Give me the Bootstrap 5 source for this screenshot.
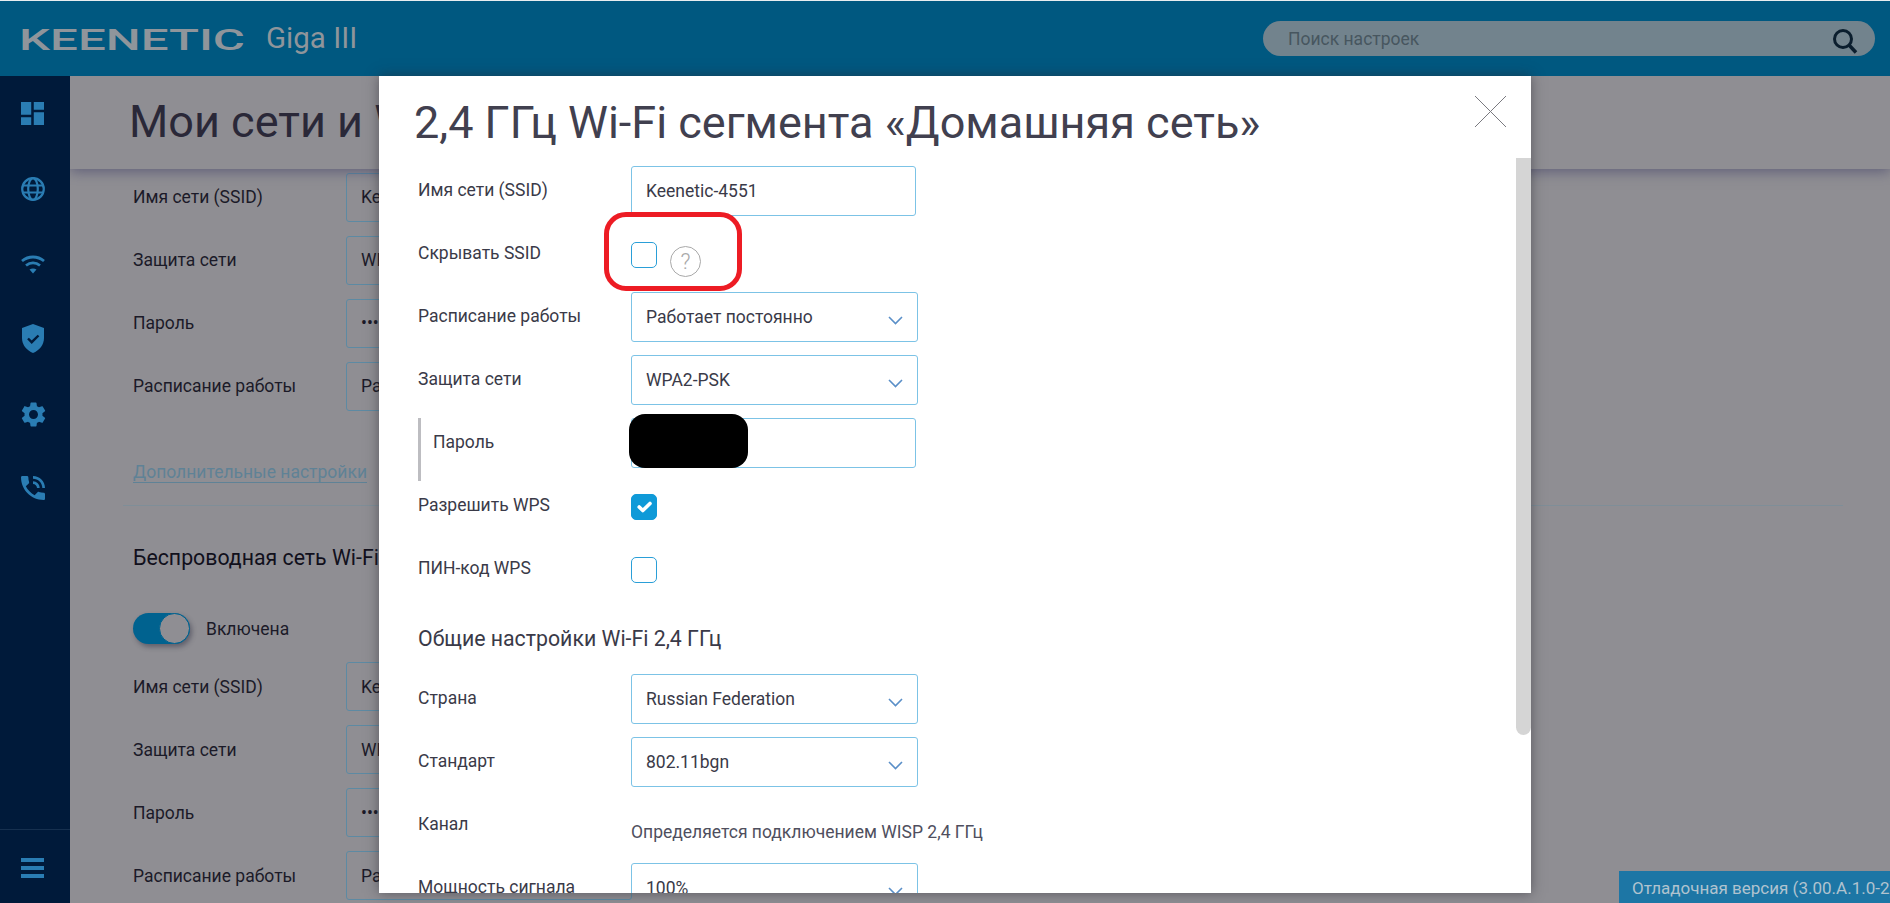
<!doctype html>
<html lang="ru">
<head>
<meta charset="utf-8">
<title>Keenetic Giga III</title>
<link href="https://cdn.jsdelivr.net/npm/bootstrap@5.3.0/dist/css/bootstrap.min.css" rel="stylesheet">
<style>
html,body{height:100%;overflow:hidden}
body{font-family:Roboto,"Liberation Sans",sans-serif;background:#8f8e93;color:#1b1a28;font-size:17.5px}
.kn-page{height:903px;position:relative;overflow:hidden}
.kn-top{height:76px;background:#005880;border-top:1px solid #e8edf0;flex:none}
.kn-logo{margin-left:19px;display:block}
.kn-logo text{font-family:Roboto,sans-serif;font-weight:500;font-size:29px;fill:#8f959b}
.kn-model{margin-left:21px;font-size:29.5px;font-weight:400;color:#8f959b;line-height:1}
.kn-search{width:612px;height:35px;margin-right:15px;position:relative}
.kn-search input{height:35px;padding:0 25px;border:0;background:#72838d;color:#4a5a66;font-size:17.5px;font-family:Roboto,sans-serif}
.kn-search input::placeholder{color:#47565f;opacity:1}
.kn-search svg{position:absolute;right:17px;top:7px}
.kn-side{width:70px;background:#001a3a;flex:none}
.kn-navlist{padding-top:26px}
.kn-navico{height:74px;padding-left:21px;display:flex;align-items:flex-start}
.kn-navico svg{fill:#2a7db3;display:block}
.kn-navico svg.kn-nudge{margin-top:4px}
.kn-navico svg.kn-line{fill:none;stroke:#2a7db3}
.kn-navico svg .kn-solid{fill:#2a7db3;stroke:none}
.kn-sidefoot{border-top:1px solid #16304f;height:74px;padding:28px 0 0 21px}
.kn-sidefoot i{display:block;height:4px;width:23px;background:#2a7db3;margin-bottom:4px}
.kn-band{height:93px;flex:none;padding:20px 0 0 59px;box-shadow:0 3px 12px rgba(60,60,100,.55);position:relative;background:#8f8e93}
.kn-band h1{font-size:45px;font-weight:400;line-height:52px;margin:0;color:#2a2838;white-space:nowrap}
.kn-bg{padding:4px 47px 0 63px;overflow:hidden}
.kn-bgrow{height:49px;margin-bottom:14px}
.kn-bglabel{width:213px;color:#1b1a28;flex:none}
.kn-bgbox{width:286px;height:49px;border:1px solid #5d8aa3;border-radius:3px;padding:0 14px;display:flex;align-items:center;flex:none;color:#1b1a28}
.kn-more{color:#5f8296;border-bottom:1px solid #5f8296;line-height:20px;display:inline-block;margin-top:37px}
.kn-rule{border-top:1px solid #7f8e98;margin:20px 0 0 -10px}
.kn-bghead{font-size:21.3px;line-height:28px;margin:38px 0 41px;font-weight:400;color:#11101c}
.kn-switchrow{margin-bottom:18px}
.kn-toggle{width:57px;height:31px;border-radius:16px;background:#00628f;box-shadow:2px 3px 5px rgba(40,40,60,.45);flex:none}
.kn-knob{width:31px;height:31px;border-radius:50%;background:#8f8e93;border:1px solid #00628f}
.kn-modal{position:absolute;left:379px;top:76px;width:1152px;height:817px;background:#fff;box-shadow:0 0 12px rgba(40,40,50,.55);overflow:hidden;padding:21px 0 0 39px;color:#3a3a48}
.kn-title{font-size:45px;font-weight:400;line-height:52px;margin:0 0 17px -4px;color:#41404f;white-space:nowrap}
.kn-row{height:50px;margin-bottom:13px}
.kn-label{width:213px;flex:none;color:#3a3a48;line-height:48px;white-space:nowrap}
.kn-pass{height:63px;margin-bottom:0;border-left:3px solid #bdbdc1}
.kn-pass .kn-label{width:210px;padding-left:12px}
.form-control.kn-field{width:285px;height:50px;border:1px solid #7cc3e6;border-radius:3px;padding:0 14px;font-size:17.5px;color:#3a3a48}
.form-select.kn-field{width:287px;height:50px;border:1px solid #7cc3e6;border-radius:3px;padding:0 14px;font-size:17.5px;color:#3a3a48;background-position:right 14px top 23px;background-size:15px 9px;background-image:url("data:image/svg+xml,%3csvg xmlns='http://www.w3.org/2000/svg' viewBox='0 0 15 9'%3e%3cpath fill='none' stroke='%235a8fc8' stroke-width='1.6' d='M1 1l6.5 6.5L14 1'/%3e%3c/svg%3e")}
.form-check-input.kn-box{width:26px;height:26px;margin:13px 0 0;border:1px solid #2a9fd8;border-radius:5px;flex:none}
.form-check-input.kn-box:checked{background-color:#0f9ad8;border-color:#0f9ad8}
.kn-help{width:31px;height:31px;border:1px solid #a9a9a9;color:#a9a9a9;font-size:22px;font-weight:300;margin:17px 0 0 13px}
.kn-sub{font-size:21.3px;line-height:28px;height:67px;padding-top:18px;margin:0;font-weight:400;color:#3a3a48}
.kn-hint{margin-top:20px;color:#4f4f5e;line-height:24px;white-space:nowrap}
.kn-close{position:absolute;right:25px;top:20px}
.kn-thumb{position:absolute;right:0;top:82px;width:15px;height:577px;background:#d5d5d5;border-radius:0 0 8px 8px}
.kn-mark{position:absolute;left:225px;top:136px;width:138px;height:79px;border:5px solid #ed1c24;border-radius:22px}
.kn-blot{position:absolute;left:250px;top:338px;width:119px;height:54px;background:#000;border-radius:16px}
.kn-debug{position:absolute;right:0;bottom:0;width:271px;height:32px;background:#1d76a5;color:#b0c3cf;font-size:17px;padding-left:13px;line-height:34px;white-space:nowrap;overflow:hidden}
</style>
</head>
<body>
<div class="kn-page d-flex flex-column">
  <header class="kn-top d-flex align-items-center justify-content-between">
    <div class="d-flex align-items-center">
      <svg class="kn-logo" width="226" height="24" viewBox="0 0 226 24"><text x="0" y="22.500" textLength="226" lengthAdjust="spacingAndGlyphs">KEENETIC</text></svg>
      <span class="kn-model">Giga III</span>
    </div>
    <div class="kn-search">
      <input class="form-control rounded-pill" type="text" placeholder="Поиск настроек">
      <svg width="26" height="26" viewBox="0 0 26 26" fill="none" stroke="#0b1e2e"><circle cx="11" cy="11" r="8.500" stroke-width="3"/><path d="M17 17l7 7.500" stroke-width="3.500"/></svg>
    </div>
  </header>
  <div class="d-flex flex-grow-1 overflow-hidden">
    <aside class="kn-side d-flex flex-column">
      <div class="kn-navlist flex-grow-1">
        <div class="kn-navico"><svg width="23" height="23" viewBox="3 3 18 18"><path d="M3 13h8V3H3v10zm0 8h8v-6H3v6zm10 0h8V11h-8v10zm0-18v6h8V3h-8z"/></svg></div>
        <div class="kn-navico"><svg class="kn-line" width="24" height="26" viewBox="0 0 24 26" stroke-width="2.200"><circle cx="12" cy="13" r="10.800"/><ellipse cx="12" cy="13" rx="4.800" ry="10.800"/><path d="M1.500 9.500h21M1.500 16.500h21"/></svg></div>
        <div class="kn-navico"><svg class="kn-line kn-nudge" width="24" height="24" viewBox="0 0 24 24" stroke-width="2.800"><path d="M1 7c6.500-5.300 15.500-5.300 22 0M5 11.500c4.200-3.300 9.800-3.300 14 0"/><path class="kn-solid" d="M8.500 15.500L12 19.500l3.500-4c-2-1.500-5-1.500-7 0z"/></svg></div>
        <div class="kn-navico"><svg width="24" height="29" viewBox="0 0 24 29"><path d="M12 0L1 4v10c0 7 4.800 12.500 11 15 6.200-2.500 11-8 11-15V4z"/><path d="M7 14.500l3.700 3.700L17.500 11.500" fill="none" stroke="#001a3a" stroke-width="2.400"/></svg></div>
        <div class="kn-navico"><svg class="kn-nudge" width="25" height="25" viewBox="2.200 2 19.600 20"><path d="M19.140 12.940c.04-.3.06-.61.06-.94 0-.32-.02-.64-.07-.94l2.030-1.580c.18-.14.23-.41.12-.61l-1.920-3.320c-.12-.22-.37-.29-.59-.22l-2.390.96c-.5-.38-1.030-.7-1.620-.94l-.36-2.540c-.04-.24-.24-.41-.48-.41h-3.840c-.24 0-.43.17-.47.41l-.36 2.540c-.59.24-1.130.57-1.620.94l-2.390-.96c-.22-.08-.47 0-.59.22L2.740 8.870c-.12.21-.08.47.12.61l2.030 1.580c-.05.3-.09.63-.09.94s.02.64.07.94l-2.030 1.580c-.18.14-.23.41-.12.61l1.920 3.320c.12.22.37.29.59.22l2.390-.96c.5.38 1.030.7 1.620.94l.36 2.540c.05.24.24.41.48.41h3.840c.24 0 .44-.17.47-.41l.36-2.540c.59-.24 1.130-.56 1.620-.94l2.390.96c.22.08.47 0 .59-.22l1.920-3.320c.12-.22.07-.47-.12-.61l-2.010-1.580zM12 15.600c-1.980 0-3.600-1.620-3.600-3.600s1.620-3.600 3.600-3.600 3.600 1.620 3.600 3.600-1.620 3.600-3.600 3.600z"/></svg></div>
        <div class="kn-navico"><svg class="kn-nudge" width="24" height="24" viewBox="3 3 18 18"><path d="M20 15.500c-1.250 0-2.450-.2-3.570-.57-.35-.11-.74-.03-1.020.24l-2.200 2.200c-2.830-1.440-5.150-3.750-6.590-6.590l2.200-2.210c.28-.26.36-.65.25-1C8.700 6.450 8.500 5.250 8.500 4c0-.55-.45-1-1-1H4c-.55 0-1 .45-1 1 0 9.390 7.610 17 17 17 .55 0 1-.45 1-1v-3.500c0-.55-.45-1-1-1zM19 12h2c0-4.970-4.030-9-9-9v2c3.870 0 7 3.130 7 7zm-4 0h2c0-2.760-2.240-5-5-5v2c1.660 0 3 1.340 3 3z"/></svg></div>
      </div>
      <div class="kn-sidefoot"><i></i><i></i><i></i></div>
    </aside>
    <main class="flex-grow-1 d-flex flex-column overflow-hidden">
      <div class="kn-band"><h1>Мои сети и Wi-Fi</h1></div>
      <div class="kn-bg">
        <div class="kn-bgrow d-flex align-items-center"><div class="kn-bglabel">Имя сети (SSID)</div><div class="kn-bgbox">Keenetic-4551</div></div>
        <div class="kn-bgrow d-flex align-items-center"><div class="kn-bglabel">Защита сети</div><div class="kn-bgbox">WPA2-PSK</div></div>
        <div class="kn-bgrow d-flex align-items-center"><div class="kn-bglabel">Пароль</div><div class="kn-bgbox">••••••••</div></div>
        <div class="kn-bgrow d-flex align-items-center"><div class="kn-bglabel">Расписание работы</div><div class="kn-bgbox">Работает постоянно</div></div>
        <a class="kn-more text-decoration-none">Дополнительные настройки</a>
        <div class="kn-rule"></div>
        <h2 class="kn-bghead">Беспроводная сеть Wi-Fi 5 ГГц</h2>
        <div class="kn-switchrow d-flex align-items-center">
          <div class="kn-toggle d-flex justify-content-end"><div class="kn-knob"></div></div>
          <span class="ms-3">Включена</span>
        </div>
        <div class="kn-bgrow d-flex align-items-center"><div class="kn-bglabel">Имя сети (SSID)</div><div class="kn-bgbox">Keenetic-4551</div></div>
        <div class="kn-bgrow d-flex align-items-center"><div class="kn-bglabel">Защита сети</div><div class="kn-bgbox">WPA2-PSK</div></div>
        <div class="kn-bgrow d-flex align-items-center"><div class="kn-bglabel">Пароль</div><div class="kn-bgbox">••••••••</div></div>
        <div class="kn-bgrow d-flex align-items-center"><div class="kn-bglabel">Расписание работы</div><div class="kn-bgbox">Работает постоянно</div></div>
      </div>
    </main>
  </div>

  <section class="kn-modal">
    <h2 class="kn-title">2,4 ГГц Wi-Fi сегмента «Домашняя сеть»</h2>
    <div class="kn-row d-flex"><label class="kn-label">Имя сети (SSID)</label><input class="form-control kn-field" value="Keenetic-4551"></div>
    <div class="kn-row d-flex"><label class="kn-label">Скрывать SSID</label><input class="form-check-input kn-box" type="checkbox"><span class="kn-help rounded-circle d-inline-flex align-items-center justify-content-center">?</span></div>
    <div class="kn-row d-flex"><label class="kn-label">Расписание работы</label><select class="form-select kn-field"><option>Работает постоянно</option></select></div>
    <div class="kn-row d-flex"><label class="kn-label">Защита сети</label><select class="form-select kn-field"><option>WPA2-PSK</option></select></div>
    <div class="kn-row kn-pass d-flex"><label class="kn-label">Пароль</label><input class="form-control kn-field" value=""></div>
    <div class="kn-row d-flex"><label class="kn-label">Разрешить WPS</label><input class="form-check-input kn-box" type="checkbox" checked></div>
    <div class="kn-row d-flex"><label class="kn-label">ПИН-код WPS</label><input class="form-check-input kn-box" type="checkbox"></div>
    <h3 class="kn-sub">Общие настройки Wi-Fi 2,4 ГГц</h3>
    <div class="kn-row d-flex"><label class="kn-label">Страна</label><select class="form-select kn-field"><option>Russian Federation</option></select></div>
    <div class="kn-row d-flex"><label class="kn-label">Стандарт</label><select class="form-select kn-field"><option>802.11bgn</option></select></div>
    <div class="kn-row d-flex"><label class="kn-label">Канал</label><div class="kn-hint">Определяется подключением WISP 2,4 ГГц</div></div>
    <div class="kn-row d-flex"><label class="kn-label">Мощность сигнала</label><select class="form-select kn-field"><option>100%</option></select></div>
    <svg class="kn-close" width="31" height="31" viewBox="0 0 31 31" stroke="#7a7a80" stroke-width="1"><path d="M0 0l31 31M31 0L0 31"/></svg>
    <div class="kn-thumb"></div>
    <div class="kn-mark"></div>
    <div class="kn-blot"></div>
  </section>
  <div class="kn-debug">Отладочная версия (3.00.A.1.0-2)</div>
</div>
<script src="https://cdn.jsdelivr.net/npm/bootstrap@5.3.0/dist/js/bootstrap.bundle.min.js"></script>
</body>
</html>
